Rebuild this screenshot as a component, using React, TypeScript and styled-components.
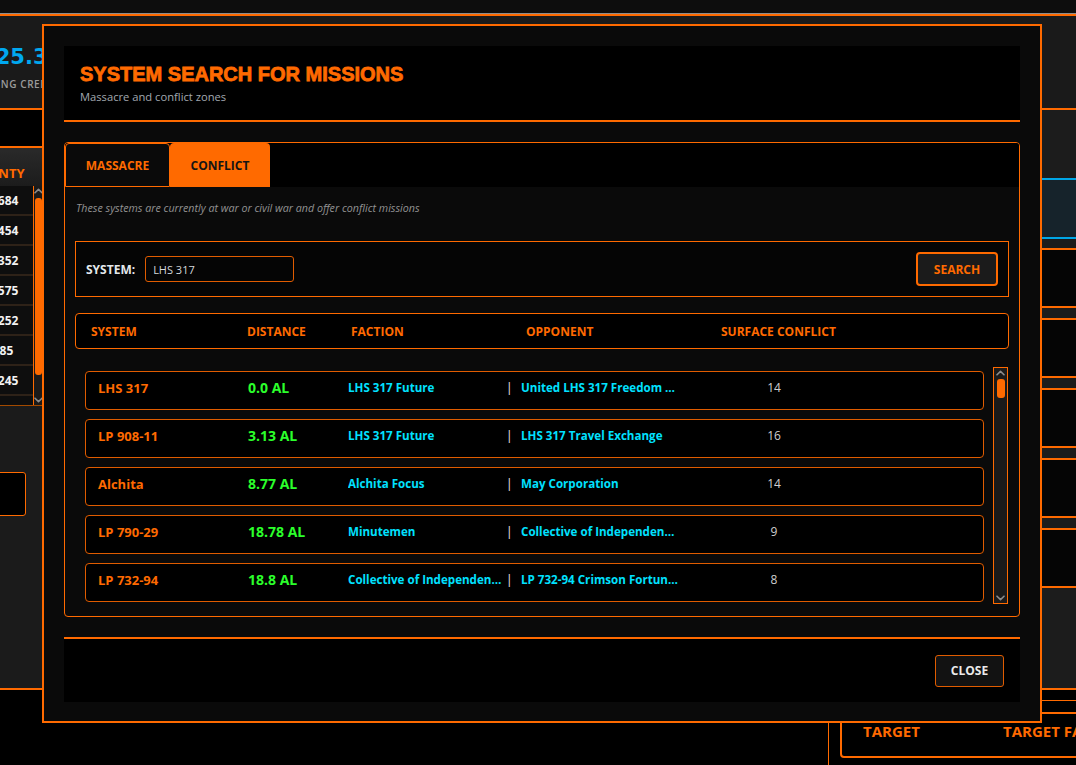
import React from "react";
import styled, { createGlobalStyle } from "styled-components";

const OR = "#ff6a00";
const OR_DIM = "#e05c00";
const CYAN = "#00e1ff";
const GREEN = "#2bff2b";

const Global = createGlobalStyle`
  *, *::before, *::after { box-sizing: border-box; }
  html, body { margin: 0; padding: 0; background: #000; }
  body { font-family: "Open Sans", "Noto Sans", sans-serif; overflow: hidden; }
`;

/* ---------- background dashboard ---------- */

const Viewport = styled.div`
  width: 1076px;
  height: 765px;
  overflow: hidden;
  background: #000;
`;

const Dashboard = styled.div`
  width: 1400px;
  height: 765px;
  margin-left: -260px;
  display: flex;
  flex-direction: column;
`;

const TopStrip = styled.div`
  flex: none;
  height: 14px;
  background: #0d0d0d;
  border-bottom: 1px solid #8e8e8e;
`;

const StatBar = styled.div`
  flex: none;
  height: 96px;
  background: #1a1a1a;
  border-top: 2px solid ${OR};
  border-bottom: 2px solid ${OR};
  display: flex;
  padding-left: 163px;
`;

const StatCard = styled.div`
  width: 200px;
  display: flex;
  flex-direction: column;
  align-items: center;
  padding-top: 29px;
`;

const StatValue = styled.div`
  font-family: "DejaVu Sans", sans-serif;
  font-weight: 700;
  font-size: 21px;
  line-height: 24px;
  color: #00a8f0;
  white-space: nowrap;
`;

const StatLabel = styled.div`
  margin: 9px 0 0 26px;
  font-size: 10px;
  line-height: 13px;
  font-weight: 600;
  letter-spacing: 0.6px;
  color: #9a9a9a;
  text-transform: uppercase;
  white-space: nowrap;
`;

const MainRow = styled.div`
  flex: none;
  height: 580px;
  display: grid;
  grid-template-columns: 303px 785px 312px;
`;

const LeftColumn = styled.div`
  display: flex;
  flex-direction: column;
  min-height: 0;
`;

const Toolbar = styled.div`
  flex: none;
  height: 36px;
  background: #000;
`;

const LeftPanel = styled.div`
  flex: 1;
  display: flex;
  flex-direction: column;
  background: #1b1b1b;
  border-top: 2px solid ${OR};
  border-bottom: 2px solid ${OR};
`;

const PanelHeader = styled.div`
  flex: none;
  height: 38px;
  display: grid;
  grid-template-columns: 1fr 60px 10px;
  align-items: end;
  padding-bottom: 4px;
  background: linear-gradient(#2a2a2a, #1c1c1c);
`;

const HeadCell = styled.div<{ $center?: boolean }>`
  display: flex;
  justify-content: ${(p) => (p.$center ? "center" : "flex-start")};
  color: ${OR};
  font-weight: 700;
  font-size: 13px;
  line-height: 18px;
  padding: ${(p) => (p.$center ? "0 12px 0 0" : "0 0 0 14px")};
  white-space: nowrap;
`;

const BountyTable = styled.div`
  flex: none;
  height: 220px;
  display: flex;
  border-bottom: 1px solid #a34a00;
`;

const BountyRows = styled.div`
  flex: 1;
  overflow: hidden;
  background: #0e0e0e;
  border-right: 1px solid ${OR};
`;

const BountyRow = styled.div`
  height: 30px;
  display: grid;
  grid-template-columns: 1fr 60px;
  align-items: center;
  border-bottom: 2px solid #2e2218;
`;

const BountyName = styled.div`
  padding-left: 14px;
  color: #cfcfcf;
  font-size: 12px;
`;

const BountyValue = styled.div`
  text-align: center;
  color: #f2f2f2;
  font-weight: 700;
  font-size: 12px;
  white-space: nowrap;
`;

const ScrollTrack = styled.div<{ $w: number; $framed?: boolean }>`
  flex: none;
  width: ${(p) => p.$w}px;
  display: flex;
  flex-direction: column;
  align-items: center;
  background: #1a1a1a;
  border: ${(p) => (p.$framed ? `1px solid ${OR}` : "none")};
`;

const ArrowBtn = styled.div`
  flex: none;
  height: 10px;
  display: flex;
  align-items: center;
  justify-content: center;
`;

const Thumb = styled.div<{ $w: number; $h: number; $top: number }>`
  flex: none;
  width: ${(p) => p.$w}px;
  height: ${(p) => p.$h}px;
  margin-top: ${(p) => p.$top}px;
  background: ${OR};
  border-radius: 3px;
`;

const TrackFill = styled.div`
  flex: 1;
`;

const LeftBox = styled.div`
  flex: none;
  align-self: flex-end;
  width: 220px;
  height: 44px;
  margin: 66px 17px 0 0;
  background: #000;
  border: 1px solid ${OR};
  border-radius: 3px;
`;

const RightPanel = styled.div`
  grid-column: 3;
  display: flex;
  flex-direction: column;
  background: #1c1c1c;
  border-bottom: 2px solid ${OR};
`;

const RightHead = styled.div`
  flex: none;
  height: 68px;
`;

const SelectedMission = styled.div`
  flex: none;
  height: 61px;
  background: #16232b;
  border-top: 2px solid #00a6e6;
  border-bottom: 2px solid #00a6e6;
`;

const MissionList = styled.div`
  display: flex;
  flex-direction: column;
  gap: 10px;
  padding-top: 9px;
`;

const MissionCard = styled.div`
  height: 60px;
  background: #050505;
  border: 2px solid ${OR};
`;

const BottomRow = styled.div`
  flex: 1;
  display: grid;
  grid-template-columns: 303px 785px 312px;
`;

const TargetSection = styled.div`
  grid-column: 3;
  margin-top: 10px;
  border-left: 1px solid ${OR};
  border-top: 1px solid ${OR};
  padding: 11px 0 0 11px;
`;

const TargetBox = styled.div`
  height: 46px;
  display: grid;
  grid-template-columns: 140px 1fr;
  padding: 7px 0 0 21px;
  background: #000;
  border: 2px solid ${OR};
  border-radius: 4px;
`;

const TargetHead = styled.div`
  color: ${OR};
  font-weight: 700;
  font-size: 15px;
  line-height: 20px;
  white-space: nowrap;
`;

/* ---------- modal ---------- */

const Overlay = styled.div`
  position: fixed;
  inset: 0;
  display: flex;
  align-items: flex-start;
  justify-content: flex-start;
  padding: 24px 0 0 42px;
`;

const Modal = styled.div`
  width: 1000px;
  height: 699px;
  display: flex;
  flex-direction: column;
  padding: 20px 20px 19px;
  background: #0a0a0a;
  border: 2px solid ${OR};
`;

const Header = styled.header`
  flex: none;
  padding: 17px 16px 15px;
  background: #000;
  border-bottom: 2px solid ${OR};
`;

const Title = styled.h2`
  margin: 0;
  font-family: "Liberation Sans", Arial, sans-serif;
  font-weight: 700;
  font-size: 20px;
  line-height: 23px;
  color: ${OR};
  -webkit-text-stroke: 0.8px ${OR};
`;

const Subtitle = styled.p`
  margin: 3px 0 0;
  font-size: 11.2px;
  line-height: 16px;
  color: #a2a9b0;
`;

const TabsBox = styled.section`
  flex: none;
  height: 475px;
  margin-top: 20px;
  display: flex;
  flex-direction: column;
  overflow: hidden;
  background: #0a0a0a;
  border: 1px solid ${OR};
  border-radius: 4px;
`;

const TabList = styled.div`
  flex: none;
  height: 44px;
  display: flex;
  background: #000;
`;

const Tab = styled.button<{ $active?: boolean; $w: number }>`
  width: ${(p) => p.$w}px;
  height: 44px;
  margin: 0;
  padding: 0;
  display: flex;
  align-items: center;
  justify-content: center;
  font-family: "Open Sans", sans-serif;
  font-weight: 700;
  font-size: 12px;
  color: ${(p) => (p.$active ? "#141414" : OR)};
  background: ${(p) => (p.$active ? OR : "#0a0a0a")};
  border: ${(p) => (p.$active ? "none" : `1px solid ${OR}`)};
  border-radius: 4px 4px 0 0;
  cursor: pointer;
`;

const TabContent = styled.div`
  flex: 1;
  padding: 14px 10px 11px;
  display: flex;
  flex-direction: column;
`;

const Description = styled.p`
  margin: 0 0 26px 1px;
  font-size: 10.7px;
  line-height: 14px;
  font-style: italic;
  color: #929292;
`;

const SearchBox = styled.div`
  flex: none;
  height: 56px;
  display: flex;
  align-items: center;
  gap: 10px;
  padding: 0 10px;
  background: #050505;
  border: 1px solid ${OR};
`;

const SearchLabel = styled.label`
  font-weight: 700;
  font-size: 12px;
  color: #e4e8ec;
`;

const SearchInput = styled.input`
  width: 149px;
  height: 26px;
  padding: 0 7px;
  font-family: "Open Sans", sans-serif;
  font-size: 11px;
  color: #d4d8dc;
  background: #050505;
  border: 1px solid ${OR_DIM};
  border-radius: 3px;
  outline: none;
`;

const ActionButton = styled.button<{ $light?: boolean }>`
  height: ${(p) => (p.$light ? 32 : 34)}px;
  width: ${(p) => (p.$light ? 69 : 82)}px;
  padding: 0;
  font-family: "Open Sans", sans-serif;
  font-weight: 700;
  font-size: 12px;
  color: ${(p) => (p.$light ? "#eaeaea" : OR)};
  background: ${(p) => (p.$light ? "#121212" : "#1b1b1b")};
  border: ${(p) => (p.$light ? `1px solid ${OR_DIM}` : `2px solid ${OR}`)};
  border-radius: ${(p) => (p.$light ? 3 : 4)}px;
  cursor: pointer;
`;

const SearchButton = styled(ActionButton)`
  margin-left: auto;
`;

const TableHead = styled.div`
  flex: none;
  height: 36px;
  margin-top: 16px;
  display: grid;
  grid-template-columns: 156px 104px 175px 195px 1fr;
  align-items: center;
  padding-left: 15px;
  background: #000;
  border: 1px solid ${OR};
  border-radius: 4px;
`;

const ColTitle = styled.div`
  color: ${OR};
  font-weight: 700;
  font-size: 12px;
  white-space: nowrap;
`;

const ListArea = styled.div`
  flex: none;
  height: 240px;
  margin-top: 16px;
  display: flex;
  padding: 0 1px 0 10px;
  overflow: hidden;
`;

const Rows = styled.div`
  flex: 1;
  display: flex;
  flex-direction: column;
  gap: 9px;
  padding-top: 6px;
  overflow: hidden;
`;

const ModalTrack = styled(ScrollTrack)`
  margin: 2px 0 1px 9px;
`;

const Row = styled.div`
  flex: none;
  height: 39px;
  display: grid;
  grid-template-columns: 150px 100px 158px 15px 160px 186px;
  align-items: center;
  padding: 0 12px 6px;
  background: #000;
  border: 1px solid ${OR_DIM};
  border-radius: 4px;
`;

const SysName = styled.div`
  color: ${OR};
  font-weight: 700;
  font-size: 13px;
  white-space: nowrap;
`;

const Distance = styled.div`
  color: ${GREEN};
  font-weight: 700;
  font-size: 14px;
  white-space: nowrap;
`;

const FactionName = styled.div`
  padding-right: 3px;
  color: ${CYAN};
  font-weight: 700;
  font-size: 11.6px;
  white-space: nowrap;
  overflow: hidden;
  text-overflow: ellipsis;
`;

const Pipe = styled.div`
  color: #ffe8f2;
  font-size: 12px;
`;

const Surface = styled.div`
  text-align: center;
  color: #cfcfcf;
  font-size: 12px;
`;

const Footer = styled.footer`
  flex: none;
  height: 65px;
  margin-top: 20px;
  display: flex;
  align-items: center;
  justify-content: flex-end;
  padding-right: 16px;
  background: #000;
  border-top: 2px solid ${OR};
`;

/* ---------- data ---------- */

const bounties = [
  { name: "Mission 1", value: "1,684" },
  { name: "Mission 2", value: "1,454" },
  { name: "Mission 3", value: "1,352" },
  { name: "Mission 4", value: "1,575" },
  { name: "Mission 5", value: "1,252" },
  { name: "Mission 6", value: "185" },
  { name: "Mission 7", value: "1,245" },
  { name: "Mission 8", value: "1,120" },
];

const systems = [
  { name: "LHS 317", dist: "0.0 AL", faction: "LHS 317 Future", opponent: "United LHS 317 Freedom Party", surface: 14 },
  { name: "LP 908-11", dist: "3.13 AL", faction: "LHS 317 Future", opponent: "LHS 317 Travel Exchange", surface: 16 },
  { name: "Alchita", dist: "8.77 AL", faction: "Alchita Focus", opponent: "May Corporation", surface: 14 },
  { name: "LP 790-29", dist: "18.78 AL", faction: "Minutemen", opponent: "Collective of Independent Miners", surface: 9 },
  { name: "LP 732-94", dist: "18.8 AL", faction: "Collective of Independent Miners", opponent: "LP 732-94 Crimson Fortune Corp", surface: 8 },
];

const Chevron = ({ down }: { down?: boolean }) => (
  <svg width="9" height="6" viewBox="0 0 9 6" fill="none">
    <path
      d={down ? "M1 1.2 L4.5 4.6 L8 1.2" : "M1 4.8 L4.5 1.4 L8 4.8"}
      stroke="#8c8c8c"
      strokeWidth="1.6"
      strokeLinecap="round"
      strokeLinejoin="round"
    />
  </svg>
);

export default function App() {
  return (
    <>
      <Global />
      <Viewport>
        <Dashboard>
          <TopStrip />
          <StatBar>
            <StatCard>
              <StatValue>1,225.3</StatValue>
              <StatLabel>Pending credits</StatLabel>
            </StatCard>
          </StatBar>
          <MainRow>
            <LeftColumn>
              <Toolbar />
              <LeftPanel>
                <PanelHeader>
                  <HeadCell>MISSION</HeadCell>
                  <HeadCell $center>BOUNTY</HeadCell>
                </PanelHeader>
                <BountyTable>
                  <BountyRows>
                    {bounties.map((b) => (
                      <BountyRow key={b.name}>
                        <BountyName>{b.name}</BountyName>
                        <BountyValue>{b.value}</BountyValue>
                      </BountyRow>
                    ))}
                  </BountyRows>
                  <ScrollTrack $w={9}>
                    <ArrowBtn>
                      <Chevron />
                    </ArrowBtn>
                    <Thumb $w={7} $h={177} $top={2} />
                    <TrackFill />
                    <ArrowBtn>
                      <Chevron down />
                    </ArrowBtn>
                  </ScrollTrack>
                </BountyTable>
                <LeftBox />
              </LeftPanel>
            </LeftColumn>
            <RightPanel>
              <RightHead />
              <SelectedMission />
              <MissionList>
                {[0, 1, 2, 3, 4].map((i) => (
                  <MissionCard key={i} />
                ))}
              </MissionList>
            </RightPanel>
          </MainRow>
          <BottomRow>
            <TargetSection>
              <TargetBox>
                <TargetHead>TARGET</TargetHead>
                <TargetHead>TARGET FACTION</TargetHead>
              </TargetBox>
            </TargetSection>
          </BottomRow>
        </Dashboard>
      </Viewport>

      <Overlay>
        <Modal>
          <Header>
            <Title>SYSTEM SEARCH FOR MISSIONS</Title>
            <Subtitle>Massacre and conflict zones</Subtitle>
          </Header>

          <TabsBox>
            <TabList>
              <Tab $w={105}>MASSACRE</Tab>
              <Tab $w={100} $active>
                CONFLICT
              </Tab>
            </TabList>
            <TabContent>
              <Description>
                These systems are currently at war or civil war and offer conflict missions
              </Description>
              <SearchBox>
                <SearchLabel htmlFor="sys">SYSTEM:</SearchLabel>
                <SearchInput id="sys" defaultValue="LHS 317" />
                <SearchButton>SEARCH</SearchButton>
              </SearchBox>
              <TableHead>
                <ColTitle>SYSTEM</ColTitle>
                <ColTitle>DISTANCE</ColTitle>
                <ColTitle>FACTION</ColTitle>
                <ColTitle>OPPONENT</ColTitle>
                <ColTitle>SURFACE CONFLICT</ColTitle>
              </TableHead>
              <ListArea>
                <Rows>
                  {systems.map((s) => (
                    <Row key={s.name}>
                      <SysName>{s.name}</SysName>
                      <Distance>{s.dist}</Distance>
                      <FactionName>{s.faction}</FactionName>
                      <Pipe>|</Pipe>
                      <FactionName>{s.opponent}</FactionName>
                      <Surface>{s.surface}</Surface>
                    </Row>
                  ))}
                </Rows>
                <ModalTrack $w={15} $framed>
                  <ArrowBtn>
                    <Chevron />
                  </ArrowBtn>
                  <Thumb $w={8} $h={19} $top={1} />
                  <TrackFill />
                  <ArrowBtn>
                    <Chevron down />
                  </ArrowBtn>
                </ModalTrack>
              </ListArea>
            </TabContent>
          </TabsBox>

          <Footer>
            <ActionButton $light>CLOSE</ActionButton>
          </Footer>
        </Modal>
      </Overlay>
    </>
  );
}
